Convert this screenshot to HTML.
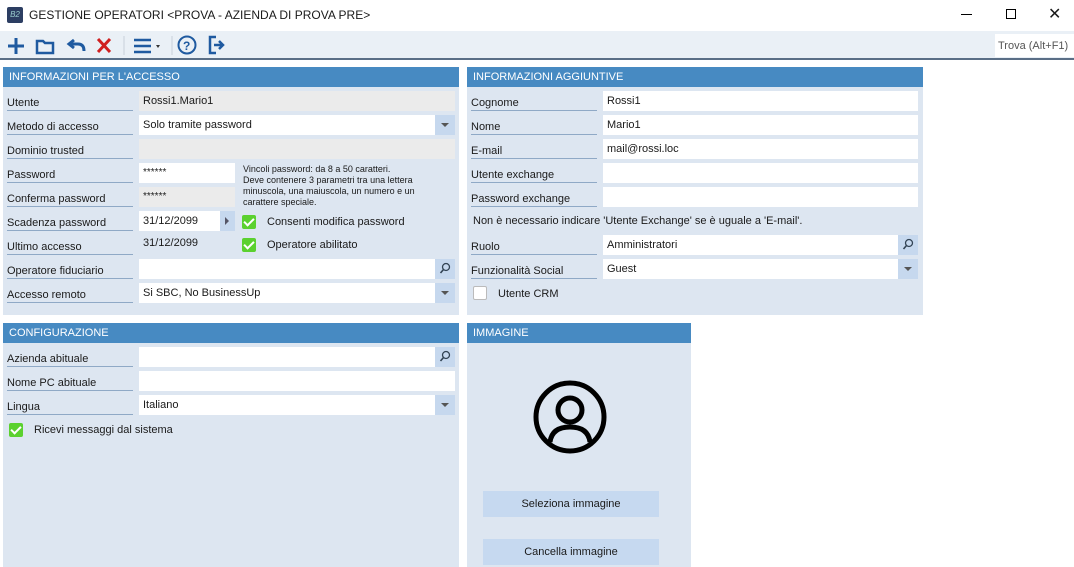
<!DOCTYPE html>
<html><head><meta charset="utf-8"><style>
*{box-sizing:border-box;margin:0;padding:0}
body{width:1074px;height:567px;overflow:hidden;background:#fff;font-family:"Liberation Sans",sans-serif;font-size:11px;color:#1a1a1a;position:relative}
.a{position:absolute}
.tb{left:0;top:31px;width:1074px;height:29px;background:#eaf0f6;border-bottom:2px solid #5a6e86}
.panel{position:absolute;background:#dde6f1}
.hd{position:absolute;left:0;top:0;right:0;height:20px;background:#478ac2;color:#fff;font-size:11px;padding:4px 6px;line-height:13px}
.lb{position:absolute;height:20px;border-bottom:1px solid #8fa9c6;padding-top:6px;font-size:11px}
.f{position:absolute;height:20px;background:#fff;padding:4px 4px;font-size:11px}
.g{background:#ebebeb}
.btn{position:absolute;width:20px;height:20px;right:0;top:0;background:#c6d8ee}
.chk{position:absolute;width:14px;height:14px;background:#5bd12f;border-radius:2px}
.chk:after{content:"";position:absolute;left:4px;top:1px;width:4px;height:8px;border:solid #fff;border-width:0 2px 2px 0;transform:rotate(45deg)}
.bt{position:absolute;background:#c6d9f0;text-align:center;font-size:11px;line-height:26px;height:26px}
.dd{position:absolute;left:6px;top:8px;border:4px solid transparent;border-top-color:#555}
</style></head><body>
<div class="a" style="left:7px;top:7px;width:16px;height:16px;background:#2c3e62;border-radius:2px;color:#9cc;font-size:8px;line-height:16px;text-align:center;font-style:italic">B2</div>
<div class="a" style="left:29px;top:8px;font-size:12px">GESTIONE OPERATORI &lt;PROVA - AZIENDA DI PROVA PRE&gt;</div>
<div class="a" style="left:961px;top:14px;width:11px;height:1px;background:#000"></div>
<div class="a" style="left:1006px;top:9px;width:10px;height:10px;border:1px solid #000"></div>
<div class="a" style="left:1048px;top:4px;font-size:16px">✕</div>
<div class="a tb"></div>
<svg class="a" style="left:0;top:31px" width="240" height="29">
<g stroke="#1f5aa0" stroke-width="3" fill="none">
<path d="M16 7v16M8 15h16"/>
<path d="M37 10h6l2 2h8v10H37z" stroke-width="2.5"/>
<path d="M70 13h8q6 0 6 7M74 9l-5 4 5 4" stroke-width="3"/>
</g>
<path d="M98 8l12 13M110 8L98 21" stroke="#d02020" stroke-width="3"/>
<path d="M124 5v19M172 5v19" stroke="#c8d0da"/>
<path d="M134 9h17M134 15h17M134 21h17" stroke="#1f5aa0" stroke-width="2.5"/>
<path d="M156 14l2 3 2-3z" fill="#333"/>
<circle cx="187" cy="14" r="8.5" stroke="#1f5aa0" stroke-width="2" fill="none"/>
<text x="183" y="19" font-size="12" font-weight="bold" fill="#1f5aa0" font-family="Liberation Sans">?</text>
<path d="M216 6h-6v16h6M214 14h8M219 10l4 4-4 4" stroke="#1f5aa0" stroke-width="2.5" fill="none"/>
</svg>
<div class="a" style="left:995px;top:34px;width:79px;height:23px;background:#fff;color:#555;font-size:11px;padding:6px 3px;white-space:nowrap">Trova (Alt+F1)</div>

<div class="panel" style="left:3px;top:67px;width:456px;height:248px">
<div class="hd">INFORMAZIONI PER L'ACCESSO</div>
<div class="lb" style="left:4px;top:24px;width:126px">Utente</div><div class="f g" style="left:136px;top:24px;width:316px">Rossi1.Mario1</div>
<div class="lb" style="left:4px;top:48px;width:126px">Metodo di accesso</div><div class="f" style="left:136px;top:48px;width:316px">Solo tramite password<div class="btn"><span class="dd"></span></div></div>
<div class="lb" style="left:4px;top:72px;width:126px">Dominio trusted</div><div class="f g" style="left:136px;top:72px;width:316px"></div>
<div class="lb" style="left:4px;top:96px;width:126px">Password</div><div class="f" style="left:136px;top:96px;width:96px;font-size:10px">******</div>
<div class="lb" style="left:4px;top:120px;width:126px">Conferma password</div><div class="f g" style="left:136px;top:120px;width:96px;font-size:10px">******</div>
<div class="a" style="left:240px;top:97px;font-size:9px;line-height:11px;width:200px">Vincoli password: da 8 a 50 caratteri.<br>Deve contenere 3 parametri tra una lettera minuscola, una maiuscola, un numero e un carattere speciale.</div>
<div class="lb" style="left:4px;top:144px;width:126px">Scadenza password</div><div class="f" style="left:136px;top:144px;width:96px">31/12/2099<div class="btn" style="width:15px"><span class="a" style="left:5px;top:6px;border:4px solid transparent;border-left-color:#556"></span></div></div>
<div class="lb" style="left:4px;top:168px;width:126px">Ultimo accesso</div><div class="a" style="left:140px;top:170px;font-size:11px">31/12/2099</div>
<div class="chk" style="left:239px;top:148px"></div><div class="a" style="left:264px;top:149px;font-size:11px">Consenti modifica password</div>
<div class="chk" style="left:239px;top:171px"></div><div class="a" style="left:264px;top:172px;font-size:11px">Operatore abilitato</div>
<div class="lb" style="left:4px;top:192px;width:126px">Operatore fiduciario</div><div class="f" style="left:136px;top:192px;width:316px"><div class="btn"><svg width="20" height="20"><circle cx="11" cy="8" r="3.5" fill="none" stroke="#345" stroke-width="1.3"/><path d="M8.5 10.5l-3 3.5" stroke="#345" stroke-width="1.6"/></svg></div></div>
<div class="lb" style="left:4px;top:216px;width:126px">Accesso remoto</div><div class="f" style="left:136px;top:216px;width:316px">Si SBC, No BusinessUp<div class="btn"><span class="dd"></span></div></div>
</div>

<div class="panel" style="left:467px;top:67px;width:456px;height:248px">
<div class="hd">INFORMAZIONI AGGIUNTIVE</div>
<div class="lb" style="left:4px;top:24px;width:126px">Cognome</div><div class="f" style="left:136px;top:24px;width:315px">Rossi1</div>
<div class="lb" style="left:4px;top:48px;width:126px">Nome</div><div class="f" style="left:136px;top:48px;width:315px">Mario1</div>
<div class="lb" style="left:4px;top:72px;width:126px">E-mail</div><div class="f" style="left:136px;top:72px;width:315px">mail@rossi.loc</div>
<div class="lb" style="left:4px;top:96px;width:126px">Utente exchange</div><div class="f" style="left:136px;top:96px;width:315px"></div>
<div class="lb" style="left:4px;top:120px;width:126px">Password exchange</div><div class="f" style="left:136px;top:120px;width:315px"></div>
<div class="a" style="left:6px;top:148px;font-size:11px">Non è necessario indicare 'Utente Exchange' se è uguale a 'E-mail'.</div>
<div class="lb" style="left:4px;top:168px;width:126px">Ruolo</div><div class="f" style="left:136px;top:168px;width:315px">Amministratori<div class="btn"><svg width="20" height="20"><circle cx="11" cy="8" r="3.5" fill="none" stroke="#345" stroke-width="1.3"/><path d="M8.5 10.5l-3 3.5" stroke="#345" stroke-width="1.6"/></svg></div></div>
<div class="lb" style="left:4px;top:192px;width:126px">Funzionalità Social</div><div class="f" style="left:136px;top:192px;width:315px">Guest<div class="btn"><span class="dd"></span></div></div>
<div class="a" style="left:6px;top:219px;width:14px;height:14px;background:#fff;border:1px solid #bbb;border-radius:2px"></div>
<div class="a" style="left:31px;top:221px;font-size:11px">Utente CRM</div>
</div>

<div class="panel" style="left:3px;top:323px;width:456px;height:244px">
<div class="hd">CONFIGURAZIONE</div>
<div class="lb" style="left:4px;top:24px;width:126px">Azienda abituale</div><div class="f" style="left:136px;top:24px;width:316px"><div class="btn"><svg width="20" height="20"><circle cx="11" cy="8" r="3.5" fill="none" stroke="#345" stroke-width="1.3"/><path d="M8.5 10.5l-3 3.5" stroke="#345" stroke-width="1.6"/></svg></div></div>
<div class="lb" style="left:4px;top:48px;width:126px">Nome PC abituale</div><div class="f" style="left:136px;top:48px;width:316px"></div>
<div class="lb" style="left:4px;top:72px;width:126px">Lingua</div><div class="f" style="left:136px;top:72px;width:316px">Italiano<div class="btn"><span class="dd"></span></div></div>
<div class="chk" style="left:6px;top:100px"></div><div class="a" style="left:31px;top:101px;font-size:11px">Ricevi messaggi dal sistema</div>
</div>

<div class="panel" style="left:467px;top:323px;width:224px;height:244px">
<div class="hd">IMMAGINE</div>
<svg class="a" style="left:66px;top:56px" width="76" height="76"><g fill="none" stroke="#000" stroke-width="5"><circle cx="37" cy="38" r="34"/><circle cx="37" cy="31" r="12"/><path d="M17 63q2-15 20-15t20 15"/></g></svg>
<div class="bt" style="left:16px;top:168px;width:176px">Seleziona immagine</div>
<div class="bt" style="left:16px;top:216px;width:176px">Cancella immagine</div>
</div>
</body></html>
